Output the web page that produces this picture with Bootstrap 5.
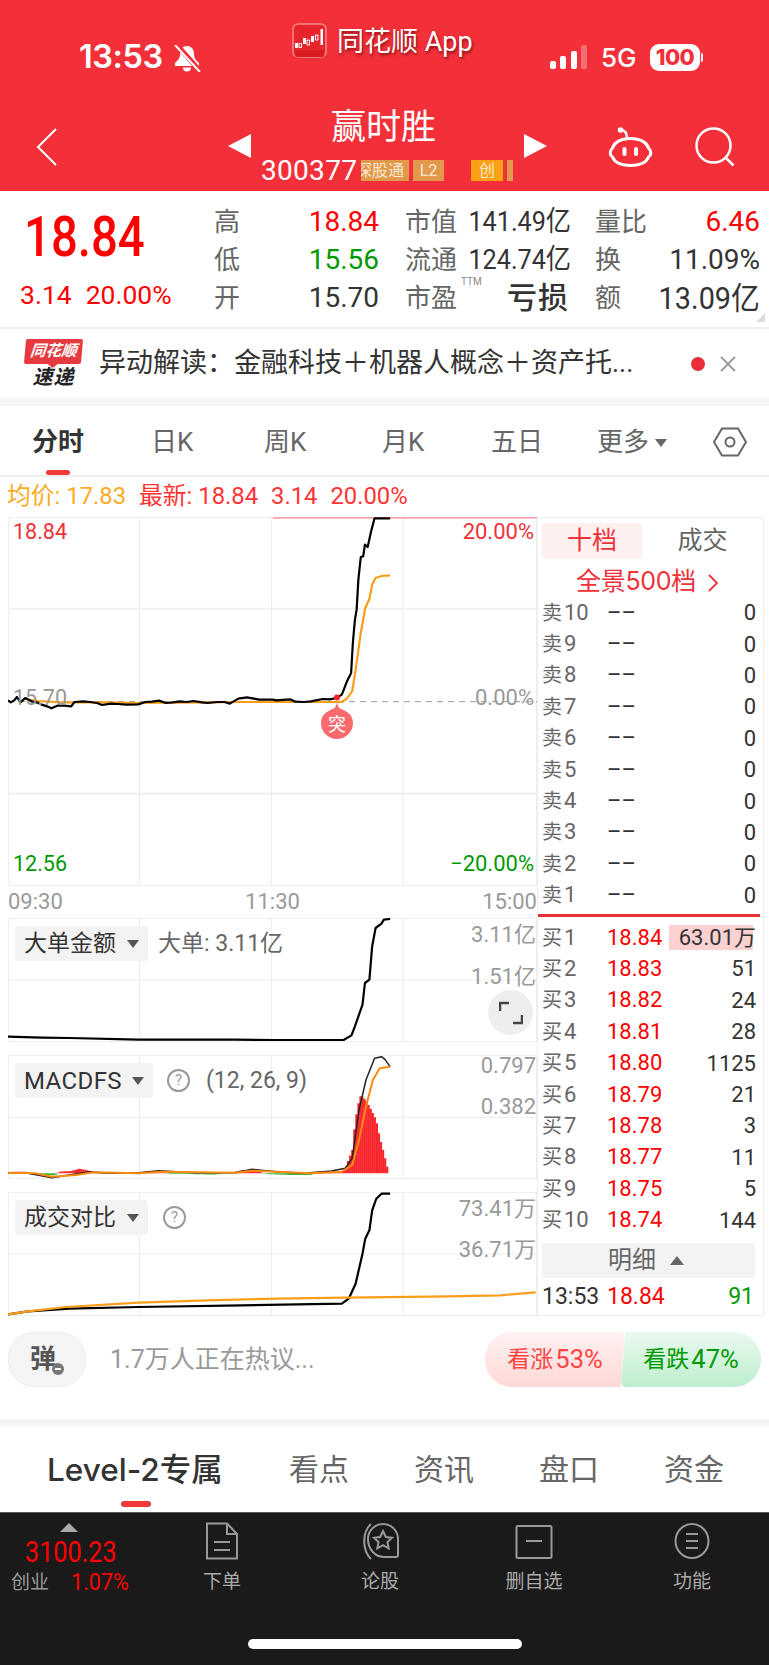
<!DOCTYPE html>
<html lang="zh-CN">
<head>
  <meta charset="UTF-8" />
  <meta name="viewport" content="width=device-width, initial-scale=1.0" />
  <title>赢时胜</title>
  <link href="https://cdn.jsdelivr.net/npm/bootstrap@5.3.3/dist/css/bootstrap.min.css" rel="stylesheet" />
  <script src="https://cdn.jsdelivr.net/npm/bootstrap@5.3.3/dist/js/bootstrap.bundle.min.js"></script>
  <style>
    html, body { margin: 0; background: #fff; }
    body { width: 769px; height: 1665px; overflow: hidden; font-family: Roboto, "Noto Sans CJK SC", sans-serif; color: #333; line-height: 1; }
    .up { color: #f00; }
    .down { color: #090; }
    /* 行情数字比常规字体窄一些 */
    .nar { display: inline-block; transform: scaleX(.9); transform-origin: right center; }
    .nar-w { display: inline-block; transform: scaleX(.93); transform-origin: right center; }
    .nar-l { display: inline-block; transform: scaleX(.86); transform-origin: left center; }

    /* 顶部红色区 */
    .app-head { height: 191px; background: #f3303a; color: #fff; }
    .st-row { height: 100px; display: flex; align-items: flex-start; }
    .st-time { margin: 42px 0 0 79px; width: 90px; font: 600 32.5px/30px Inter, sans-serif; letter-spacing: -.4px; white-space: nowrap; }
    .st-bell { margin: 45px 0 0 5px; }
    .st-logo { margin: 23px 0 0 91px; }
    .st-app { margin: 26px 0 0 10px; width: 134px; font-size: 27px; line-height: 32px; text-shadow: 1px 2px 3px rgba(90,0,0,.7); white-space: nowrap; }
    .st-sig { margin: 45px 0 0 79px; }
    .st-5g { margin: 44px 0 0 13px; width: 36px; font: 500 26px/27px Inter, sans-serif; }
    .st-bat { margin: 44px 0 0 13px; width: 50px; height: 27px; border-radius: 9px; background: #fff; color: #f3303a; font: 800 22px/27px Inter, sans-serif; text-align: center; letter-spacing: -.5px; }
    .st-nub { margin: 53px 0 0 1px; width: 2px; height: 9px; background: #fff; border-radius: 0 2px 2px 0; }
    .hd-row { display: flex; align-items: flex-start; }
    .hd-back { margin: 28px 0 0 36px; }
    .hd-tri-l { margin: 34px 0 0 171px; }
    .hd-tri-r { margin-top: 34px; }
    .hd-mid { width: 273px; }
    .hd-name { margin-top: 8px; padding-right: 8px; font-size: 35px; line-height: 40px; text-align: center; }
    .hd-code { margin-top: 12px; padding-left: 10px; display: flex; align-items: center; height: 21px; }
    .hd-num { width: 100px; font-size: 28px; letter-spacing: .3px; }
    .hd-tag { height: 21px; font-size: 16px; line-height: 21px; background: #e2994c; color: #fbe8d0; display: flex; justify-content: center; overflow: hidden; white-space: nowrap; }
    .hd-tag.t-sz { width: 48px; padding-right: 5px; justify-content: flex-end; }
    .hd-tag.t-l2 { width: 31px; margin-left: 4px; }
    .hd-tag.t-cy { width: 32px; margin-left: 27px; background: #fda016; }
    .hd-tag.t-end { width: 6px; margin-left: 4px; }
    .hd-bot { margin: 27px 0 0 61px; }
    .hd-find { margin: 27px 0 0 42px; }

    /* 报价 */
    .qt-wrap { height: 138px; display: flex; border-bottom: 2px solid #efefef; position: relative; }
    .qt-left { width: 214px; flex: none; }
    .qt-price { margin: 19px 0 0 24px; font-size: 55px; line-height: 55px; font-weight: 500; }
    .qt-chg { margin: 17px 0 0 20px; font-size: 26.5px; line-height: 26px; display: flex; gap: 14px; }
    .qt-grid { margin-top: 12px; display: grid; grid-template-columns: 165px 164px 165px; column-gap: 26px; grid-auto-rows: 38px; }
    .qt-cell { display: flex; justify-content: space-between; align-items: center; white-space: nowrap; }
    .qt-lab { font-size: 26px; color: #666; position: relative; }
    .qt-val { font-size: 28px; }
    .qt-val.lg { font-size: 31px; }
    .qt-ttm { position: absolute; left: 56px; top: -8px; font-size: 10px; color: #888; }
    .qt-big { font-size: 30px; font-weight: 500; letter-spacing: 1px; }
    .qt-corner { position: absolute; right: 4px; bottom: 5px; width: 0; height: 0; border-left: 9px solid transparent; border-bottom: 9px solid #ddd; }

    /* 异动条 */
    .nt-bar { height: 69px; display: flex; align-items: center; }
    .nt-logo { margin-left: 25px; width: 57px; flex: none; text-align: center; font-style: italic; font-weight: 700; }
    .nt-red { display: block; position: relative; height: 25px; line-height: 24px; background: #e63a40; color: #fff; font-size: 15.5px; border-radius: 2px; transform: skewX(-5deg); }
    .nt-red::after { content: ""; position: absolute; left: 24px; top: 25px; border-left: 5px solid transparent; border-right: 5px solid transparent; border-top: 4px solid #e63a40; }
    .nt-blk { display: block; margin-top: 3px; font-size: 20px; line-height: 21px; color: #222; letter-spacing: 1px; }
    .nt-txt { margin-left: 17px; width: 592px; font-size: 27px; white-space: nowrap; }
    .nt-dot { width: 14px; height: 14px; border-radius: 50%; background: #e8303a; flex: none; }
    .nt-x { margin-left: 15px; }
    .gap-band { height: 8px; background: #f5f5f5; }

    /* 周期切换 */
    .pd-tabs { height: 71px; border-bottom: 2px solid #efefef; display: flex; position: relative; font-size: 26px; color: #666; }
    .pd-tab { position: absolute; top: 23px; line-height: 26px; white-space: nowrap; }
    .pd-on { color: #333; font-weight: 700; }
    .pd-mark { position: absolute; left: 46px; bottom: 0; width: 24px; height: 5px; border-radius: 3px; background: #f33a3a; }
    .pd-more { display: inline-block; margin-left: 6px; vertical-align: 4px; border-left: 6px solid transparent; border-right: 6px solid transparent; border-top: 8px solid #666; }
    .pd-hex { position: absolute; left: 713px; top: 21px; }

    /* 均价行 */
    .avg-row { height: 40px; padding-left: 7px; display: flex; align-items: center; font-size: 23.800px; color: #f33; white-space: nowrap; gap: 13px; }
    .avg-row span:first-child { color: #fbab1f; }

    /* 图表区 */
    .ch-body { display: flex; padding-left: 8px; }
    .ch-left { width: 529px; flex: none; }
    .ch-box { position: relative; }
    .ch-box svg { display: block; }
    .ln { fill: none; vector-effect: non-scaling-stroke; stroke-linejoin: round; }
    .gr { stroke: #ececec; stroke-width: 1; }
    .gr2 { stroke: #efefef; stroke-width: 2; }
    .pk { stroke: #000; stroke-width: 2.200; }
    .or { stroke: #fa9e1a; stroke-width: 2.200; }
    .ch-lab { position: absolute; font-size: 22px; line-height: 22px; white-space: nowrap; color: #999; }
    .ch-lab.l { left: 5px; font-size: 21.5px; }
    .ch-lab.r { right: 1px; }
    .ch-lab.r3 { right: 3px; }
    .c-red { color: #f0313a; }
    .c-grn { color: #090; }
    .ch-tm { height: 32px; display: flex; justify-content: space-between; align-items: center; font-size: 22px; color: #999; }
    .ch-mb { margin-bottom: 13px; }
    .sb-tag { position: absolute; left: 7px; top: 8px; height: 35px; display: flex; align-items: center; padding: 0 9px; background: #f3f3f3; border-radius: 4px; font-size: 23px; color: #333; white-space: nowrap; gap: 11px; }
    .sb-tag.t-lat { font-size: 24px; letter-spacing: .4px; gap: 10px; }
    .sb-car { border-left: 6px solid transparent; border-right: 6px solid transparent; border-top: 8px solid #555; }
    .sb-info { position: absolute; top: 9px; font-size: 23px; line-height: 34px; color: #666; white-space: nowrap; }
    .sb-q { position: absolute; top: 14px; width: 23px; height: 23px; border: 2px solid #999; border-radius: 50%; color: #999; font-size: 15px; line-height: 19px; text-align: center; }
    .sb-exp { position: absolute; left: 480px; top: 72px; width: 45px; height: 45px; border-radius: 50%; background: #eee; display: flex; align-items: center; justify-content: center; }
    .bd-pin { position: absolute; left: 313px; top: 177px; }

    /* 盘口 */
    .ob-side { width: 227px; height: 799px; border: 1px solid #eee; }
    .ob-tabs { display: flex; margin: 5px 0 0 4px; font-size: 25px; }
    .ob-t1 { width: 101px; height: 36px; line-height: 36px; text-align: center; background: #fff0f0; border-radius: 4px; color: #f0313a; }
    .ob-t2 { width: 122px; line-height: 36px; text-align: center; color: #666; }
    .ob-all { height: 38px; line-height: 44px; margin-left: 38px; font: 400 25px/44px Inter, "Noto Sans CJK SC", sans-serif; letter-spacing: -.3px; color: #f0313a; white-space: nowrap; }
    .ob-all svg { margin-left: 11px; }
    .ob-row { height: 31.4px; display: flex; align-items: center; padding: 0 7px 0 4px; font-size: 22px; white-space: nowrap; }
    .ob-l { width: 65px; color: #666; flex: none; }
    .ob-l b { font-weight: 400; font-size: 20px; margin-right: 2px; }
    .ob-p { width: 62px; flex: none; color: #333; }
    .ob-p.up { color: #f00; }
    .ob-q { flex: 1; text-align: right; color: #333; line-height: 25px; }
    .ob-depth { background: linear-gradient(#fbd1d2, #fbd1d2) no-repeat left center / 84px 25px; }
    .ob-line { height: 3px; margin: 3px 3px 5px 0; background: #e8323a; }
    .ob-det { height: 35px; margin: 7px 8px 0 4px; background: #f3f3f3; display: flex; align-items: center; justify-content: center; gap: 14px; font-size: 24px; color: #666; padding-right: 5px; }
    .ob-det i { border-left: 7px solid transparent; border-right: 7px solid transparent; border-bottom: 9px solid #666; }
    .ob-last { height: 37px; display: flex; align-items: center; padding: 0 9px 0 4px; font-size: 23px; }
    .ob-last .tm { width: 65px; }
    .ob-last .v { flex: 1; text-align: right; }

    /* 评论条 */
    .cm-bar { margin-top: 16px; height: 55px; padding-left: 8px; display: flex; align-items: center; }
    .cm-btn { width: 78px; height: 55px; border-radius: 26px; background: #f5f5f5; border: 1px solid #eee; position: relative; text-align: center; line-height: 53px; font-size: 26px; font-weight: 700; color: #555; padding-right: 8px; }
    .cm-minus { position: absolute; left: 43px; top: 30px; width: 12px; height: 12px; border-radius: 50%; background: #777; }
    .cm-minus::after { content: ""; position: absolute; left: 3px; top: 5px; width: 6px; height: 2px; background: #fff; }
    .cm-txt { margin-left: 24px; width: 375px; font-size: 25px; color: #999; white-space: nowrap; }
    .cm-pill { height: 55px; display: flex; align-items: center; justify-content: center; font-size: 23px; white-space: nowrap; gap: 2px; }
    .cm-pill b { font-weight: 400; font-size: 25.5px; }
    .cm-rise { width: 140px; color: #f44; background: linear-gradient(180deg, #fff1f0, #fdd9d6); border-radius: 27px 5px 5px 27px; clip-path: polygon(0 0, 100% 0, 97% 100%, 0 100%); }
    .cm-fall { width: 140px; margin-left: -4px; color: #090; background: linear-gradient(180deg, #e9faef, #bdeecd); border-radius: 5px 27px 27px 5px; clip-path: polygon(3% 0, 100% 0, 100% 100%, 0 100%); }
    .gap-band2 { margin-top: 32px; height: 7px; background: #f5f5f5; }

    /* 资讯切换 */
    .nw-tabs { height: 86px; position: relative; font-size: 30px; color: #666; }
    .nw-tab { position: absolute; top: 28px; line-height: 32px; white-space: nowrap; }
    .nw-on { color: #333; font: 500 31.500px/32px Inter, "Noto Sans CJK SC", sans-serif; }
    .nw-mark { position: absolute; left: 121px; top: 75px; width: 30px; height: 6px; border-radius: 3px; background: #f33a3a; }

    /* 底部导航 */
    .ft-nav { height: 153px; background: #1a1a1a; border-top: 1px solid #555; position: relative; display: grid; grid-template-columns: 140px 164px 152px 156px 160px; }
    .ft-idx { position: relative; color: #f00; }
    .ft-up { position: absolute; left: 60px; top: 10px; border-left: 9px solid transparent; border-right: 9px solid transparent; border-bottom: 9px solid #aaa; }
    .ft-val { position: absolute; left: 25px; top: 25px; font-size: 29px; line-height: 28px; transform: scaleX(.87); transform-origin: left center; }
    .ft-nm { position: absolute; left: 11px; top: 60px; font-size: 19px; line-height: 20px; color: #999; }
    .ft-pct { position: absolute; left: 71px; top: 57px; font-size: 24px; line-height: 24px; transform: scaleX(.9); transform-origin: left center; }
    .ft-it { text-align: center; color: #aaa; font-size: 19px; }
    .ft-ic { height: 50px; margin-top: 9px; display: flex; align-items: flex-start; justify-content: center; }
    .ft-home { position: absolute; left: 248px; top: 126px; width: 274px; height: 10px; border-radius: 5px; background: #fff; }
  </style>
</head>
<body>

  <!-- 状态栏 + 标题 -->
  <header class="app-head">
    <div class="st-row">
      <div class="st-time">13:53</div>
      <svg class="st-bell" width="27" height="27" viewBox="0 0 27 27">
        <path d="M13 1c-5 0-7 4-7 8 0 5-3 7-5 9v3h24v-3c-2-2-5-4-5-9 0-4-2-8-7-8z" fill="#fff"/>
        <path d="M9 22.500a4 4 0 0 0 8 0z" fill="#fff"/>
        <path d="M3 0l23 26" stroke="#f3303a" stroke-width="5"/>
        <path d="M1 0l25 27" stroke="#fff" stroke-width="2"/>
      </svg>
      <svg class="st-logo" width="35" height="35" viewBox="0 0 35 35">
        <rect x="1" y="1" width="33" height="33" rx="5" fill="#e8242c" stroke="#f9888c" stroke-width="1.500"/>
        <path d="M3 27h29v5a2 2 0 0 1-2 2H5a2 2 0 0 1-2-2z" fill="#d81c22"/>
        <path d="M3 20h3v5H3zM11 15h3v6h-3zM19 13h3v6h-3zM28.500 6h2.500v16h-2.500z" fill="#fff"/>
        <path d="M7 20.500h2.500v4H7zM15 17h2.500v5H15zM23.500 12h2.500v5h-2.500z" fill="none" stroke="#fff" stroke-width="1"/>
      </svg>
      <div class="st-app">同花顺 App</div>
      <svg class="st-sig" width="38" height="24" viewBox="0 0 38 24">
        <rect x="0" y="16" width="6" height="8" rx="2" fill="#fff"/>
        <rect x="10" y="11" width="6" height="13" rx="2" fill="#fff"/>
        <rect x="21" y="6" width="6" height="18" rx="2" fill="#fff"/>
        <rect x="31" y="0" width="6" height="24" rx="2" fill="#fff" opacity=".3"/>
      </svg>
      <div class="st-5g">5G</div>
      <div class="st-bat">100</div>
      <div class="st-nub"></div>
    </div>
    <div class="hd-row">
      <svg class="hd-back" width="21" height="38" viewBox="0 0 21 38"><path d="M20 1L2 19l18 18" fill="none" stroke="#fff" stroke-width="2"/></svg>
      <svg class="hd-tri-l" width="23" height="24" viewBox="0 0 23 24"><path d="M23 0v24L0 12z" fill="#fff"/></svg>
      <div class="hd-mid">
        <div class="hd-name">赢时胜</div>
        <div class="hd-code">
          <span class="hd-num">300377</span>
          <span class="hd-tag t-sz">深股通</span>
          <span class="hd-tag t-l2">L2</span>
          <span class="hd-tag t-cy">创</span>
          <span class="hd-tag t-end"></span>
        </div>
      </div>
      <svg class="hd-tri-r" width="23" height="24" viewBox="0 0 23 24"><path d="M0 0v24l23-12z" fill="#fff"/></svg>
      <svg class="hd-bot" width="45" height="40" viewBox="0 0 45 40">
        <circle cx="12.500" cy="3" r="2.800" fill="#fff"/>
        <path d="M14 3c4 1 5 4 5 8" fill="none" stroke="#fff" stroke-width="2.500"/>
        <path d="M22.500 11.500C12 11.500 6 16 4.500 21c-3 3-3 7 0 9 2 5 8 8.500 18 8.500s16-3.500 18-8.500c3-2 3-6 0-9-1.500-5-7.500-9.500-18-9.500z" fill="none" stroke="#fff" stroke-width="3"/>
        <rect x="14.500" y="20" width="4" height="9" rx="2" fill="#fff"/>
        <rect x="26" y="20" width="4" height="9" rx="2" fill="#fff"/>
      </svg>
      <svg class="hd-find" width="40" height="40" viewBox="0 0 40 40">
        <circle cx="18.500" cy="18.500" r="17" fill="none" stroke="#fff" stroke-width="2.500"/>
        <path d="M31 31l7.500 7.500" stroke="#fff" stroke-width="2.500"/>
      </svg>
    </div>
  </header>

  <!-- 报价 -->
  <section class="qt-wrap">
    <div class="qt-left">
      <div class="qt-price up"><span class="nar-l">18.84</span></div>
      <div class="qt-chg up"><span>3.14</span><span>20.00%</span></div>
    </div>
    <div class="qt-grid">
      <div class="qt-cell"><span class="qt-lab">高</span><span class="qt-val up">18.84</span></div>
      <div class="qt-cell"><span class="qt-lab">市值</span><span class="qt-val nar">141.49亿</span></div>
      <div class="qt-cell"><span class="qt-lab">量比</span><span class="qt-val up">6.46</span></div>
      <div class="qt-cell"><span class="qt-lab">低</span><span class="qt-val down">15.56</span></div>
      <div class="qt-cell"><span class="qt-lab">流通</span><span class="qt-val nar">124.74亿</span></div>
      <div class="qt-cell"><span class="qt-lab">换</span><span class="qt-val">11.09%</span></div>
      <div class="qt-cell"><span class="qt-lab">开</span><span class="qt-val">15.70</span></div>
      <div class="qt-cell"><span class="qt-lab">市盈<span class="qt-ttm">TTM</span></span><span class="qt-big">亏损</span></div>
      <div class="qt-cell"><span class="qt-lab">额</span><span class="qt-val lg nar-w">13.09亿</span></div>
    </div>
    <span class="qt-corner"></span>
  </section>

  <!-- 异动解读 -->
  <section class="nt-bar">
    <div class="nt-logo"><span class="nt-red">同花顺</span><span class="nt-blk">速递</span></div>
    <div class="nt-txt">异动解读：金融科技＋机器人概念＋资产托...</div>
    <span class="nt-dot"></span>
    <svg class="nt-x" width="16" height="16" viewBox="0 0 16 16"><path d="M1 1l14 14M15 1L1 15" stroke="#999" stroke-width="1.800"/></svg>
  </section>
  <div class="gap-band"></div>

  <!-- 周期切换 -->
  <nav class="pd-tabs">
    <span class="pd-tab pd-on" style="left:32px">分时</span>
    <span class="pd-tab" style="left:151px">日K</span>
    <span class="pd-tab" style="left:264px">周K</span>
    <span class="pd-tab" style="left:382px">月K</span>
    <span class="pd-tab" style="left:491px">五日</span>
    <span class="pd-tab" style="left:597px">更多<i class="pd-more"></i></span>
    <svg class="pd-hex" width="34" height="30" viewBox="0 0 34 30">
      <path d="M9 1.500h16L33 15l-8 13.500H9L1 15z" fill="none" stroke="#666" stroke-width="2"/>
      <circle cx="17" cy="15" r="4.500" fill="none" stroke="#666" stroke-width="2"/>
    </svg>
    <span class="pd-mark"></span>
  </nav>

  <div class="avg-row"><span>均价: 17.83</span><span>最新: 18.84</span><span>3.14</span><span>20.00%</span></div>

  <main class="ch-body">
    <div class="ch-left">
      <!-- 分时主图 -->
      <div class="ch-box">
        <svg width="529" height="369" viewBox="22 22 1534 1107" preserveAspectRatio="none">
          <rect class="ln gr2" x="22" y="22" width="1534" height="1107"/>
          <path class="ln gr" d="M403 22V1129M786 22V1129M1168 22V1129"/>
          <path class="ln gr2" d="M22 297H1556M22 852H1556"/>
          <path class="ln" stroke="#f9a5a8" stroke-width="2" d="M790 24H1556"/>
          <path class="ln" stroke="#999" stroke-width="1" stroke-dasharray="6 5" d="M22 576H1556"/>
          <polyline class="ln or" points="70,568 110,574 180,578 300,578 400,580 600,578 700,577 990,577 1005,566 1020,545 1030,480 1045,370 1058,295 1070,268 1078,225 1088,205 1105,199 1130,197"/>
          <polyline class="ln pk" points="22,572 30,578 40,572 48,562 58,578 72,565 90,575 105,578 120,585 135,590 148,596 165,588 185,588 205,590 215,577 240,575 260,577 280,580 295,586 320,582 340,583 365,585 400,584 420,577 440,576 460,573 480,580 500,578 520,575 540,577 560,574 585,578 600,580 630,577 650,577 665,582 690,567 715,563 735,567 750,570 790,570 800,572 840,569 855,576 880,577 900,575 935,568 955,569 975,565 990,555 1005,515 1017,490 1022,400 1028,330 1033,300 1038,210 1045,142 1052,140 1057,105 1065,112 1075,65 1085,26 1130,26"/>
        </svg>
        <span class="ch-lab l c-red" style="top:4px">18.84</span>
        <span class="ch-lab r3 c-red" style="top:4px">20.00%</span>
        <span class="ch-lab l" style="top:170px">15.70</span>
        <span class="ch-lab r3" style="top:170px">0.00%</span>
        <span class="ch-lab l c-grn" style="top:336px">12.56</span>
        <span class="ch-lab r3 c-grn" style="top:336px">−20.00%</span>
        <svg class="bd-pin" width="32" height="46" viewBox="0 0 32 46">
          <circle cx="16" cy="3.500" r="3" fill="#f22"/>
          <path d="M16 8c1 5 2 6 4 7 6 2 12 6 12 14a16 16 0 0 1-32 0c0-8 6-12 12-14 2-1 3-2 4-7z" fill="#fc6a6e"/>
          <text x="16" y="37" text-anchor="middle" font-size="18" fill="#fff" font-family="'Noto Sans CJK SC', sans-serif">突</text>
        </svg>
      </div>
      <div class="ch-tm"><span>09:30</span><span>11:30</span><span>15:00</span></div>

      <!-- 大单金额 -->
      <div class="ch-box ch-mb">
        <svg width="529" height="124" viewBox="22 25 1534 372" preserveAspectRatio="none">
          <rect class="ln gr2" x="22" y="25" width="1534" height="372"/>
          <path class="ln gr" d="M403 25V397M786 25V397M1168 25V397M22 211H1556"/>
          <polyline class="ln pk" points="22,381 120,384 200,385 400,390 680,390 800,391 995,391 1018,377 1028,350 1050,285 1057,220 1070,210 1078,110 1088,55 1105,42 1112,30 1130,28"/>
        </svg>
        <div class="sb-tag">大单金额<i class="sb-car"></i></div>
        <span class="sb-info" style="left:150px">大单: 3.11亿</span>
        <span class="ch-lab r" style="top:6px">3.11亿</span>
        <span class="ch-lab r" style="top:48px">1.51亿</span>
        <div class="sb-exp">
          <svg width="24" height="24" viewBox="0 0 24 24"><path d="M1 10V2h9M23 14v8h-9" fill="none" stroke="#444" stroke-width="2.500"/></svg>
        </div>
      </div>

      <!-- MACDFS -->
      <div class="ch-box ch-mb">
        <svg width="529" height="124" viewBox="22 435 1534 372" preserveAspectRatio="none">
          <rect class="ln gr2" x="22" y="435" width="1534" height="372"/>
          <path class="ln gr" d="M403 435V807M786 435V807M1168 435V807M22 622H1556"/>
          <path id="macdRed" class="ln" stroke="#f8262c" stroke-width="2"/>
          <path id="macdGreen" class="ln" stroke="#2fb52f" stroke-width="2"/>
          <polyline class="ln" stroke="#222" stroke-width="1.500" points="22,788 80,790 150,803 200,795 260,785 320,790 400,788 460,782 560,788 680,788 730,778 800,785 880,790 960,783 1000,775 1020,745 1040,600 1060,510 1085,445 1105,440 1115,448 1130,470"/>
          <polyline class="ln" stroke="#f98a12" stroke-width="2" points="22,788 100,790 150,800 220,795 270,787 400,790 470,785 680,788 730,782 900,790 990,785 1020,765 1040,690 1060,590 1080,510 1100,475 1130,470"/>
        </svg>
        <div class="sb-tag t-lat">MACDFS<i class="sb-car"></i></div>
        <span class="sb-q" style="left:159px">?</span>
        <span class="sb-info" style="left:198px">(12, 26, 9)</span>
        <span class="ch-lab r" style="top:0">0.797</span>
        <span class="ch-lab r" style="top:41px">0.382</span>
      </div>

      <!-- 成交对比 -->
      <div class="ch-box">
        <svg width="529" height="124" viewBox="22 845 1534 372" preserveAspectRatio="none">
          <rect class="ln gr2" x="22" y="845" width="1534" height="372"/>
          <path class="ln gr" d="M403 845V1217M786 845V1217M1168 845V1217M22 1031H1556"/>
          <polyline class="ln pk" points="22,1212 80,1203 200,1195 400,1190 700,1185 990,1180 1010,1165 1030,1120 1050,1030 1058,985 1070,960 1078,900 1090,865 1105,850 1130,850"/>
          <polyline class="ln or" points="22,1212 80,1203 190,1190 400,1177 600,1170 800,1165 1000,1162 1300,1158 1450,1155 1552,1146"/>
        </svg>
        <div class="sb-tag">成交对比<i class="sb-car"></i></div>
        <span class="sb-q" style="left:155px">?</span>
        <span class="ch-lab r" style="top:6px">73.41万</span>
        <span class="ch-lab r" style="top:47px">36.71万</span>
      </div>
    </div>

    <!-- 十档盘口 -->
    <aside class="ob-side">
      <div class="ob-tabs"><div class="ob-t1">十档</div><div class="ob-t2">成交</div></div>
      <div class="ob-all">全景500档<svg width="12" height="20" viewBox="0 0 12 20"><path d="M2 2l8 8-8 8" fill="none" stroke="#f0313a" stroke-width="1.800"/></svg></div>
      <div id="askRows"></div>
      <div class="ob-line"></div>
      <div id="bidRows"></div>
      <div class="ob-det">明细<i></i></div>
      <div class="ob-last"><span class="tm">13:53</span><span class="up">18.84</span><span class="v down">91</span></div>
    </aside>
  </main>

  <!-- 评论 / 多空 -->
  <section class="cm-bar">
    <div class="cm-btn">弹<span class="cm-minus"></span></div>
    <div class="cm-txt">1.7万人正在热议...</div>
    <div class="cm-pill cm-rise">看涨<b>53%</b></div>
    <div class="cm-pill cm-fall">看跌<b>47%</b></div>
  </section>
  <div class="gap-band2"></div>

  <nav class="nw-tabs">
    <span class="nw-tab nw-on" style="left:47px">Level-2专属</span>
    <span class="nw-tab" style="left:289px">看点</span>
    <span class="nw-tab" style="left:414px">资讯</span>
    <span class="nw-tab" style="left:539px">盘口</span>
    <span class="nw-tab" style="left:664px">资金</span>
    <span class="nw-mark"></span>
  </nav>

  <!-- 底部导航 -->
  <footer class="ft-nav">
    <div class="ft-idx">
      <i class="ft-up"></i>
      <span class="ft-val">3100.23</span>
      <span class="ft-nm">创业</span>
      <span class="ft-pct">1.07%</span>
    </div>
    <div class="ft-it">
      <div class="ft-ic"><svg width="34" height="38" viewBox="0 0 34 38"><path d="M2 1.500h20L32 12v24.500H2zM22 1.500V12h10M9 20h16M9 28h16" fill="none" stroke="#999" stroke-width="2"/></svg></div>下单
    </div>
    <div class="ft-it">
      <div class="ft-ic"><svg width="40" height="38" viewBox="0 0 40 38">
        <path d="M11 2C2 10 2 28 11 37" fill="none" stroke="#999" stroke-width="2"/>
        <path d="M8 17a15 15 0 0 1 30 0v16a2 2 0 0 1-2 2H24C15 35 8 27 8 17z" fill="none" stroke="#999" stroke-width="2"/>
        <path d="M23 9l2.800 6 6.200.7-4.600 4.300 1.300 6.300-5.700-3.200-5.700 3.200 1.300-6.300L14 15.700l6.200-.7z" fill="none" stroke="#999" stroke-width="2"/>
      </svg></div>论股
    </div>
    <div class="ft-it">
      <div class="ft-ic"><svg width="38" height="38" viewBox="0 0 38 38"><rect x="1.500" y="4" width="35" height="32" rx="1.500" fill="none" stroke="#999" stroke-width="2"/><path d="M11 19h16" stroke="#999" stroke-width="2"/></svg></div>删自选
    </div>
    <div class="ft-it">
      <div class="ft-ic"><svg width="36" height="38" viewBox="0 0 36 38"><ellipse cx="18" cy="19" rx="16.500" ry="17" fill="none" stroke="#999" stroke-width="2"/><path d="M12 12h12M12 19h12M12 26h12" stroke="#999" stroke-width="2"/></svg></div>功能
    </div>
    <div class="ft-home"></div>
  </footer>

  <script>
    // 盘口行
    const asks = [10, 9, 8, 7, 6, 5, 4, 3, 2, 1];
    const bids = [
      [1, '18.84', '63.01万'], [2, '18.83', '51'], [3, '18.82', '24'], [4, '18.81', '28'], [5, '18.80', '1125'],
      [6, '18.79', '21'], [7, '18.78', '3'], [8, '18.77', '11'], [9, '18.75', '5'], [10, '18.74', '144']
    ];
    document.getElementById('askRows').innerHTML = asks.map(n =>
      `<div class="ob-row"><span class="ob-l"><b>卖</b>${n}</span><span class="ob-p">––</span><span class="ob-q">0</span></div>`).join('');
    document.getElementById('bidRows').innerHTML = bids.map((b, i) =>
      `<div class="ob-row"><span class="ob-l"><b>买</b>${b[0]}</span><span class="ob-p up">${b[1]}</span><span class="ob-q${i === 0 ? ' ob-depth' : ''}">${b[2]}</span></div>`).join('');

    // MACD 柱，基线 y=790
    const keys = [[22,786],[75,785],[90,793],[160,796],[170,785],[205,783],[230,776],[270,785],[290,792],[400,788],[420,785],[470,784],[490,792],[550,792],[620,794],[680,786],[700,780],[750,784],[770,792],[840,795],[900,795],[925,785],[990,784],[1000,775],[1020,720],[1025,665],[1035,590],[1045,555],[1060,570],[1075,598],[1090,630],[1100,680],[1110,720],[1122,770],[1127,790]];
    let red = '', green = '';
    for (let x = 24; x < 1128; x += 6) {
      let k = keys.findIndex(p => p[0] > x);
      if (k < 1) k = 1;
      const a = keys[k - 1], b = keys[k];
      const y = a[1] + (b[1] - a[1]) * (x - a[0]) / (b[0] - a[0]);
      if (y < 790) red += `M${x} 790V${y.toFixed(1)}`;
      else green += `M${x} 790V${y.toFixed(1)}`;
    }
    document.getElementById('macdRed').setAttribute('d', red);
    document.getElementById('macdGreen').setAttribute('d', green);
  </script>
</body>
</html>
